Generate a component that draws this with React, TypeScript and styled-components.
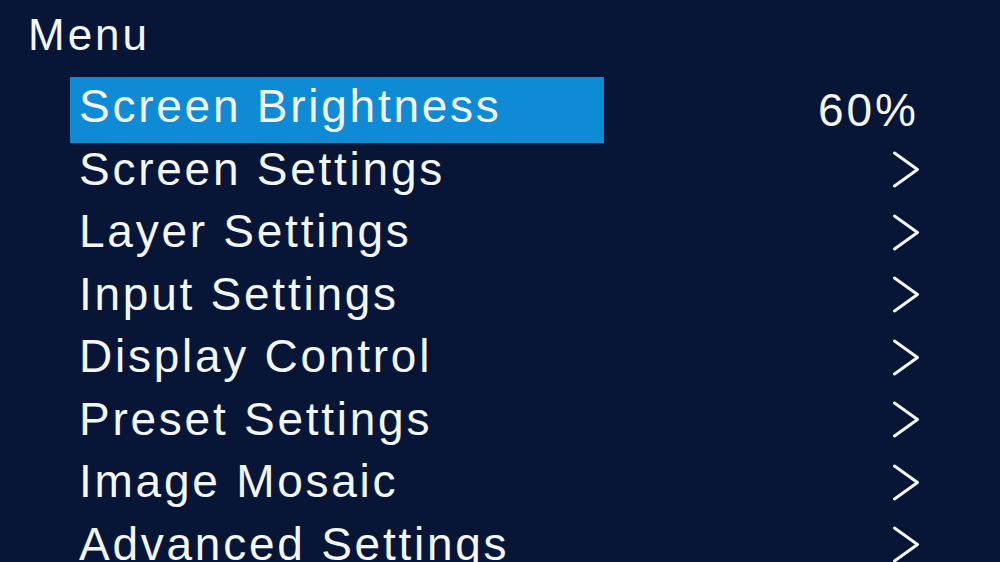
import React from 'react';
import styled, { createGlobalStyle } from 'styled-components';

const GlobalStyle = createGlobalStyle`
  html, body {
    margin: 0;
    padding: 0;
    height: 100%;
    background-color: #071637;
    overflow: hidden;
  }
  body {
    font-family: "Liberation Sans", Arial, sans-serif;
    color: #f3f5f9;
  }
`;

const Screen = styled.div`
  width: 1000px;
  height: 562px;
  padding-top: 9px;
  box-sizing: border-box;
  background-color: #071637;
  overflow: hidden;
`;

const Title = styled.div`
  padding-left: 28px;
  font-size: 44px;
  line-height: 51px;
  letter-spacing: 3px;
`;

const List = styled.div`
  display: flex;
  flex-direction: column;
  margin-top: 15px;
  padding-left: 70px;
  padding-right: 80px;
`;

const Row = styled.div`
  display: flex;
  align-items: flex-start;
  justify-content: space-between;
  height: 62.5px;
  flex-shrink: 0;
`;

const Label = styled.div<{ $active?: boolean }>`
  box-sizing: border-box;
  padding-left: 9px;
  font-size: 46px;
  letter-spacing: 2.75px;
  white-space: nowrap;
  line-height: ${p => (p.$active ? '58px' : '62.5px')};
  height: ${p => (p.$active ? '66px' : '62.5px')};
  margin-top: ${p => (p.$active ? '2px' : '0')};
  width: ${p => (p.$active ? '534px' : 'auto')};
  background-color: ${p => (p.$active ? '#0f8bd6' : 'transparent')};
`;

const Value = styled.div`
  padding-top: 4px;
  font-size: 46px;
  line-height: 62.5px;
  letter-spacing: 3px;
  margin-right: 1px;
`;

const ArrowBox = styled.div`
  display: flex;
  align-items: center;
  height: 62.5px;
  padding-top: 1px;
`;

const Chevron = () => (
  <svg width="28" height="37" viewBox="0 0 28 37">
    <polyline
      points="2.5,2 25.5,18.5 2.5,35"
      fill="none"
      stroke="#f3f5f9"
      strokeWidth="3"
      strokeLinecap="round"
      strokeLinejoin="round"
    />
  </svg>
);

const items = [
  { label: 'Screen Brightness', value: '60%' },
  { label: 'Screen Settings' },
  { label: 'Layer Settings' },
  { label: 'Input Settings' },
  { label: 'Display Control' },
  { label: 'Preset Settings' },
  { label: 'Image Mosaic' },
  { label: 'Advanced Settings' },
];

const App = () => {
  return (
    <>
      <GlobalStyle />
      <Screen>
        <Title>Menu</Title>
        <List>
          {items.map((item, i) => (
            <Row key={item.label}>
              <Label $active={i === 0}>{item.label}</Label>
              {item.value ? (
                <Value>{item.value}</Value>
              ) : (
                <ArrowBox>
                  <Chevron />
                </ArrowBox>
              )}
            </Row>
          ))}
        </List>
      </Screen>
    </>
  );
};

export default App;
